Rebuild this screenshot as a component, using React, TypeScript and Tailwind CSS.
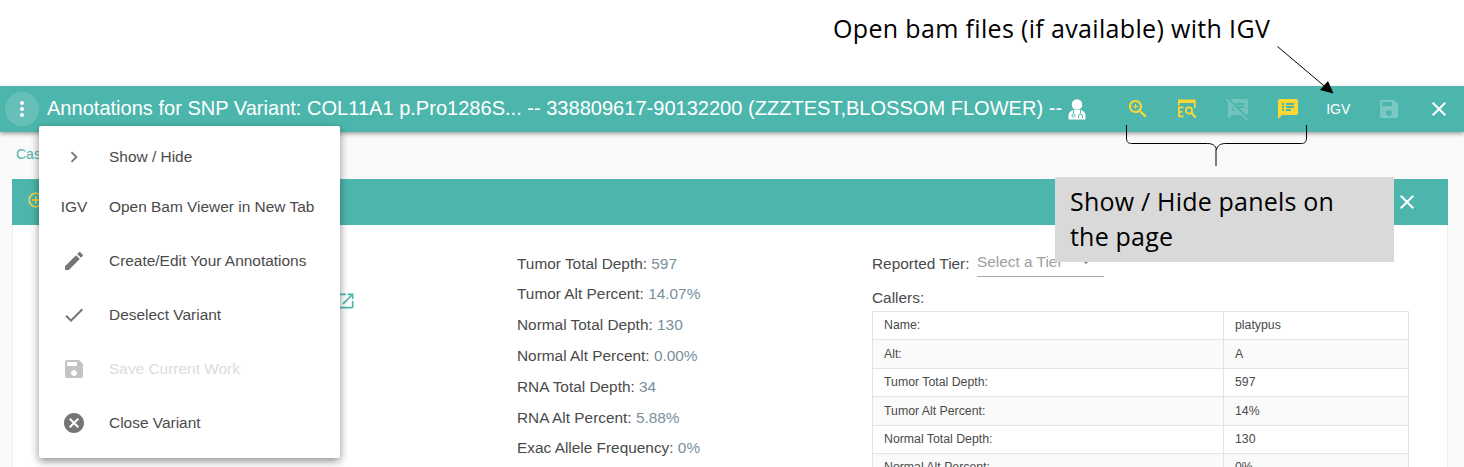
import React from "react";

const P: Record<string, string> = {
  more: "M12 8c1.1 0 2-.9 2-2s-.9-2-2-2-2 .9-2 2 .9 2 2 2zm0 2c-1.1 0-2 .9-2 2s.9 2 2 2 2-.9 2-2-.9-2-2-2zm0 6c-1.1 0-2 .9-2 2s.9 2 2 2 2-.9 2-2-.9-2-2-2z",
  zoom: "M15.5 14h-.79l-.28-.27C15.41 12.59 16 11.11 16 9.5 16 5.91 13.09 3 9.5 3S3 5.91 3 9.5 5.91 16 9.5 16c1.61 0 3.09-.59 4.23-1.57l.27.28v.79l5 4.99L20.49 19l-4.99-5zm-6 0C7.01 14 5 11.99 5 9.5S7.01 5 9.5 5 14 7.01 14 9.5 11.99 14 9.5 14zm2.5-4h-2v2H9v-2H7V9h2V7h1v2h2v1z",
  notesOff: "M10.54 11l-.54-.54L7.54 8 6 6.46 2.38 2.84 1.27 1.73 0 3l2.01 2.01L2 22l4-4h9l5.73 5.73L22 22.46 17.54 18l-7-7zM8 14H6v-2h2v2zm-2-3V9l2 2H6zm14-9H4.08L10 7.92V6h8v2h-7.92l1 1H18v2h-4.92l6.99 6.99C21.14 17.95 22 17.08 22 16V4c0-1.1-.9-2-2-2z",
  notes: "M20 2H4c-1.1 0-1.99.9-1.99 2L2 22l4-4h14c1.1 0 2-.9 2-2V4c0-1.1-.9-2-2-2zM8 14H6v-2h2v2zm0-3H6V9h2v2zm0-3H6V6h2v2zm7 6h-5v-2h5v2zm3-3h-8V9h8v2zm0-3h-8V6h8v2z",
  save: "M17 3H5c-1.11 0-2 .9-2 2v14c0 1.1.89 2 2 2h14c1.1 0 2-.9 2-2V7l-4-4zm-5 16c-1.66 0-3-1.34-3-3s1.34-3 3-3 3 1.34 3 3-1.34 3-3 3zm3-10H5V5h10v4z",
  close: "M19 6.41L17.59 5 12 10.59 6.41 5 5 6.41 10.59 12 5 17.59 6.41 19 12 13.41 17.59 19 19 17.59 13.41 12z",
  edit: "M3 17.25V21h3.75L17.81 9.94l-3.75-3.75L3 17.25zM20.71 7.04c.39-.39.39-1.02 0-1.41l-2.34-2.34c-.39-.39-1.02-.39-1.41 0l-1.83 1.83 3.75 3.75 1.83-1.83z",
  check: "M9 16.17L4.83 12l-1.42 1.41L9 19 21 7l-1.41-1.41z",
  cancel: "M12 2C6.47 2 2 6.47 2 12s4.47 10 10 10 10-4.47 10-10S17.53 2 12 2zm5 13.59L15.59 17 12 13.41 8.41 17 7 15.59 10.59 12 7 8.41 8.41 7 12 10.59 15.59 7 17 8.41 13.41 12 17 15.59z",
  right: "M8.59 16.59L13.17 12 8.59 7.41 10 6l6 6-6 6-1.41-1.41z",
  open: "M19 19H5V5h7V3H5c-1.11 0-2 .9-2 2v14c0 1.1.89 2 2 2h14c1.1 0 2-.9 2-2v-7h-2v7zM14 3v2h3.59l-9.83 9.83 1.41 1.41L19 6.41V10h2V3h-7z",
  plusCircle: "M13 7h-2v4H7v2h4v4h2v-4h4v-2h-4V7zm-1-5C6.48 2 2 6.48 2 12s4.48 10 10 10 10-4.48 10-10S17.52 2 12 2zm0 18c-4.41 0-8-3.59-8-8s3.59-8 8-8 8 3.59 8 8-3.59 8-8 8z",
};

function Icon({ d, className }: { d: string; className: string }) {
  return (
    <svg viewBox="0 0 24 24" fill="currentColor" className={className}>
      <path d={d} />
    </svg>
  );
}

function Doctor() {
  return (
    <svg viewBox="0 0 18 21" className="w-[18px] h-[21px] text-white">
      <circle cx="9" cy="5.500" r="5.300" fill="currentColor" />
      <path d="M0.500 20.500v-4c0-3 2.500-5 5-5.500h7c2.500.5 5 2.500 5 5.500v4z" fill="currentColor" />
      <path d="M5.500 11.500v3M12.500 11.500v3" stroke="#4db6ac" strokeWidth="1" fill="none" />
      <circle cx="5.500" cy="16.500" r="1.500" fill="none" stroke="#4db6ac" strokeWidth="1" />
      <path d="M10.500 19v-2a2 2 0 0 1 4 0v2" fill="none" stroke="#4db6ac" strokeWidth="1" />
    </svg>
  );
}

function EqIcon() {
  return (
    <svg viewBox="0 0 20 20" className="w-[20px] h-[20px] text-[#fdd835]">
      <rect x="1" y="0.500" width="17.500" height="3.500" fill="currentColor" />
      <path d="M1.800 3v3.500M17.800 3v6" fill="none" stroke="currentColor" strokeWidth="1.600" />
      <path d="M6.500 8.300H2V17.300H6.500M2 12.800H5.500" fill="none" stroke="currentColor" strokeWidth="1.800" />
      <circle cx="12" cy="11.500" r="3.100" fill="none" stroke="currentColor" strokeWidth="1.700" />
      <path d="M14.300 13.800l4.500 4.700" stroke="currentColor" strokeWidth="2.200" />
    </svg>
  );
}

function Btn({ children }: { children: React.ReactNode }) {
  return <div className="w-[50.3px] h-full shrink-0 flex items-center justify-center">{children}</div>;
}

function MenuItem({ icon, label, disabled, short }: { icon: React.ReactNode; label: string; disabled?: boolean; short?: boolean }) {
  return (
    <div className={short ? "h-[50px] flex items-center" : "h-[54px] flex items-center"}>
      <div className="w-[70px] shrink-0 flex justify-center">{icon}</div>
      <span className={disabled ? "text-[#dcdcdc]" : "text-[#4a4a4a]"}>{label}</span>
    </div>
  );
}

const stats = [
  ["Tumor Total Depth:", "597"],
  ["Tumor Alt Percent:", "14.07%"],
  ["Normal Total Depth:", "130"],
  ["Normal Alt Percent:", "0.00%"],
  ["RNA Total Depth:", "34"],
  ["RNA Alt Percent:", "5.88%"],
  ["Exac Allele Frequency:", "0%"],
];

const rows = [
  ["Name:", "platypus"],
  ["Alt:", "A"],
  ["Tumor Total Depth:", "597"],
  ["Tumor Alt Percent:", "14%"],
  ["Normal Total Depth:", "130"],
  ["Normal Alt Percent:", "0%"],
];

export default function App() {
  return (
    <div className="relative w-[1464px] h-[467px] overflow-hidden bg-white font-['Liberation_Sans',sans-serif]">
      <div className="h-[86px] flex items-start pl-[833px] pt-[9px] text-[25px] leading-[38px] text-black font-['Open_Sans',sans-serif] tracking-[0.34px]">
        Open bam files (if available) with IGV
      </div>

      <div className="h-[381px] bg-[#fafafa]">
        <div className="relative h-[46px] bg-[#4db6ac] shadow-[0_2px_4px_rgba(0,0,0,0.35)] flex items-center">
          <div className="w-[47px] shrink-0 flex items-center justify-center">
            <div className="w-[34px] h-[34px] ml-[-3px] rounded-full bg-white/15 flex items-center justify-center">
              <Icon d={P.more} className="w-6 h-6 text-white" />
            </div>
          </div>
          <div className="text-white text-[20.06px] whitespace-nowrap mt-[-2px]">
            Annotations for SNP Variant: COL11A1 p.Pro1286S... -- 338809617-90132200 (ZZZTEST,BLOSSOM FLOWER) --
          </div>
          <div className="ml-[6px] w-[18px] shrink-0 flex">
            <Doctor />
          </div>
          <div className="ml-auto h-full flex">
            <Btn><Icon d={P.zoom} className="w-6 h-6 text-[#fdd835] ml-[2px]" /></Btn>
            <Btn><EqIcon /></Btn>
            <Btn><Icon d={P.notesOff} className="w-6 h-6 text-white/20" /></Btn>
            <Btn><Icon d={P.notes} className="w-6 h-6 text-[#fdd835]" /></Btn>
            <Btn><span className="text-white text-[14px]">IGV</span></Btn>
            <Btn><Icon d={P.save} className="w-6 h-6 text-white/25" /></Btn>
            <Btn><Icon d={P.close} className="w-6 h-6 text-white" /></Btn>
          </div>
        </div>

        <div className="h-[47px] pl-[16px] pt-[14px] text-[14px] leading-[16px] text-[#4db6ac]">Cases</div>

        <div className="ml-[12px] mr-[16px] h-[288px] bg-white border-x border-[#eeeeee]">
          <div className="h-[46px] -mx-px bg-[#4db6ac] flex items-center justify-between pl-[15px] pr-[29px]">
            <Icon d={P.plusCircle} className="w-[18px] h-[18px] text-[#fdd835] mt-[-4px]" />
            <Icon d={P.close} className="w-6 h-6 text-white" />
          </div>
          <div className="flex text-[15.4px] text-[#4a4a4a]">
            <div className="w-[504px] shrink-0 pl-[323px] pt-[66px]">
              <Icon d={P.open} className="w-[20px] h-[20px] text-[#4db6ac]" />
            </div>
            <div className="w-[355px] shrink-0 pt-[23.6px] flex flex-col">
              {stats.map(([k, v]) => (
                <div key={k} className="h-[30.8px] leading-[30.8px] whitespace-nowrap">
                  {k} <span className="text-[#78909c]">{v}</span>
                </div>
              ))}
            </div>
            <div className="w-[537px] shrink-0 pt-[20px]">
              <div className="flex items-center h-[32px]">
                <span className="w-[105px] shrink-0 pt-[6px]">Reported Tier:</span>
                <div className="w-[127px] h-[32px] border-b border-[#a8a8a8] flex items-center justify-between pr-[14px] pt-[2px] text-[#9e9e9e]">
                  <span>Select a Tier</span>
                  <span className="w-0 h-0 border-x-[4px] border-x-transparent border-t-[4px] border-t-[#757575]" />
                </div>
              </div>
              <div className="h-[34px] pt-[10px] leading-[22px]">Callers:</div>
              <table className="w-[537px] table-fixed border-collapse text-[12.3px] text-[#4a4a4a]">
                <tbody>
                  {rows.map(([a, b], i) => (
                    <tr key={a} className={i % 2 ? "h-[28.4px] bg-[#fafafa]" : "h-[28.4px] bg-white"}>
                      <td className="w-[351px] border border-[#e3e3e3] pl-[11px] py-0">{a}</td>
                      <td className="border border-[#e3e3e3] pl-[11px] py-0">{b}</td>
                    </tr>
                  ))}
                </tbody>
              </table>
            </div>
          </div>
        </div>
      </div>

      <div className="absolute left-[39px] top-[126px] w-[301px] h-[332px] bg-white rounded-[2px] shadow-[0_3px_8px_rgba(0,0,0,0.45)] pt-[6px] text-[15.45px]">
        <MenuItem short icon={<Icon d={P.right} className="w-[22px] h-[22px] text-[#757575]" />} label="Show / Hide" />
        <MenuItem short icon={<span className="text-[#4a4a4a] text-[15.45px]">IGV</span>} label="Open Bam Viewer in New Tab" />
        <div className="h-[2px]" />
        <MenuItem icon={<Icon d={P.edit} className="w-6 h-6 text-[#757575]" />} label="Create/Edit Your Annotations" />
        <MenuItem icon={<Icon d={P.check} className="w-6 h-6 text-[#757575]" />} label="Deselect Variant" />
        <MenuItem icon={<Icon d={P.save} className="w-6 h-6 text-[#c4c4c4]" />} label="Save Current Work" disabled />
        <MenuItem icon={<Icon d={P.cancel} className="w-6 h-6 text-[#757575]" />} label="Close Variant" />
      </div>

      <div className="absolute left-[1055px] top-[177px] w-[339px] h-[85px] bg-[#d9d9d9] pl-[15px] pt-[7px] pr-[50px] text-[25px] leading-[35px] text-black font-['Open_Sans',sans-serif] tracking-[0.2px]">
        Show / Hide panels on the page
      </div>

      <svg className="absolute left-0 top-0 pointer-events-none" width="1464" height="467" viewBox="0 0 1464 467">
        <path d="M1277.5 46.5L1329 90" stroke="#000" strokeWidth="1" fill="none" />
        <path d="M1333.5 93.5L1320 90L1328 81z" fill="#000" />
        <path d="M1126.5 125v13c0 4 2 5.5 5 5.5h76c5 0 8 2 9 6c1-4 4-6 9-6h76c3 0 5-1.500 5-5.500v-13M1216 149v17" stroke="#000" strokeWidth="1" fill="none" />
      </svg>
    </div>
  );
}
